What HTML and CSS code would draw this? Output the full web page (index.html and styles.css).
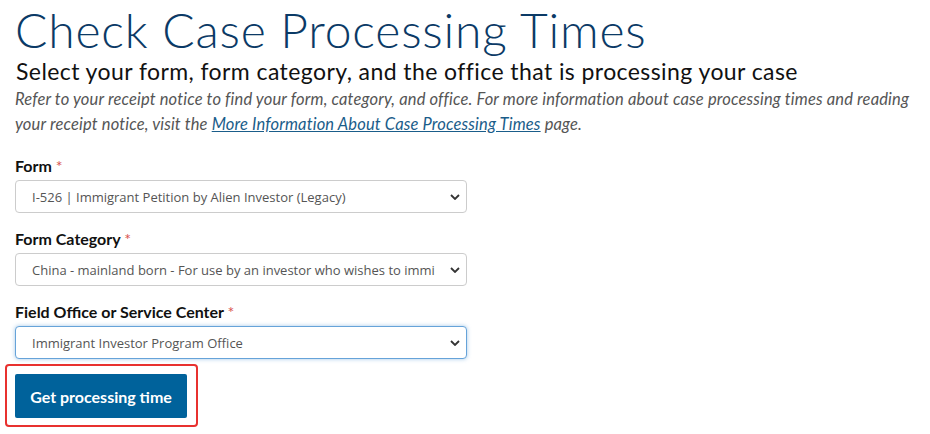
FILE: index.html
```html
<!DOCTYPE html>
<html lang="en">
<head>
<meta charset="utf-8">
<title>Check Case Processing Times</title>
<link rel="stylesheet" href="styles.css">
</head>
<body>
<main class="page">
  <h1 class="title">Check Case Processing Times</h1>
  <h2 class="subtitle">Select your form, form category, and the office that is processing your case</h2>
  <p class="intro">Refer to your receipt notice to find your form, category, and office. For more information about case processing times and reading your receipt notice, visit the <a href="#" class="link">More Information About Case Processing Times</a> page.</p>

  <form class="form">
    <div class="field">
      <label class="label">Form <span class="req">*</span></label>
      <div class="select-wrap">
        <select class="select"><option>I-526 | Immigrant Petition by Alien Investor (Legacy)</option></select>
        <svg class="chev" viewBox="0 0 10 6" width="10" height="6"><path d="M1 1l4 4 4-4" fill="none" stroke="#333" stroke-width="1.8"/></svg>
      </div>
    </div>
    <div class="field">
      <label class="label">Form Category <span class="req">*</span></label>
      <div class="select-wrap">
        <select class="select"><option>China - mainland born - For use by an investor who wishes to immi</option></select>
        <svg class="chev" viewBox="0 0 10 6" width="10" height="6"><path d="M1 1l4 4 4-4" fill="none" stroke="#333" stroke-width="1.8"/></svg>
      </div>
    </div>
    <div class="field last">
      <label class="label">Field Office or Service Center <span class="req">*</span></label>
      <div class="select-wrap">
        <select class="select focused"><option>Immigrant Investor Program Office</option></select>
        <svg class="chev" viewBox="0 0 10 6" width="10" height="6"><path d="M1 1l4 4 4-4" fill="none" stroke="#333" stroke-width="1.8"/></svg>
      </div>
    </div>
    <div class="highlight">
      <button type="button" class="btn">Get processing time</button>
    </div>
  </form>
</main>
</body>
</html>
```
FILE: styles.css
```css
* { box-sizing: border-box; }
body {
  margin: 0;
  background: #fff;
  font-family: Lato, "Open Sans", sans-serif;
  color: #1b1b1b;
}
.page {
  padding: 0 0 0 15px;
}
.title {
  margin: 0;
  padding-top: 4px;
  font-size: 48px;
  font-weight: 300;
  color: #0b3a66;
  line-height: 52px;
  letter-spacing: 0.8px;
}
.subtitle {
  margin: 1px 0 0 1px;
  font-size: 23px;
  font-weight: 400;
  line-height: 28px;
  color: #111;
  letter-spacing: 0.42px;
}
.intro {
  margin: 2px 0 0 0;
  font-size: 16.5px;
  font-style: italic;
  color: #555;
  line-height: 25px;
  max-width: 910px;
  letter-spacing: 0.15px;
}
.link {
  color: #1a5d8a;
  text-decoration: underline;
}
.form {
  margin-top: 20px;
  display: flex;
  flex-direction: column;
}
.field {
  display: flex;
  flex-direction: column;
  margin-bottom: 17px;
}
.field.last { margin-bottom: 0; }
.label {
  font-size: 16px;
  font-weight: 700;
  line-height: 18px;
  margin-bottom: 5px;
  color: #111;
}
.req { color: #d9534f; font-weight: 400; }
.select-wrap {
  position: relative;
  width: 452px;
}
.select {
  appearance: none;
  -webkit-appearance: none;
  width: 452px;
  height: 33px;
  border: 1px solid #ccc;
  border-radius: 4px;
  background: #fff;
  font-family: "Open Sans", sans-serif;
  font-size: 13px;
  color: #555;
  padding: 0 30px 0 16px;
  outline: none;
}
.select.focused {
  border-color: #66a3d9;
  box-shadow: 0 0 4px rgba(102,163,217,0.6);
}
.chev {
  position: absolute;
  right: 7px;
  top: 14px;
}
.highlight {
  align-self: flex-start;
  margin: 5px 0 0 -10px;
  padding: 8px 9px 7px 8px;
  border: 2px solid #e8312f;
  border-radius: 4px;
}
.btn {
  display: block;
  width: 172px;
  height: 44px;
  background: #00629b;
  color: #fff;
  border: none;
  border-radius: 2px;
  font-family: Lato, sans-serif;
  font-size: 16px;
  font-weight: 700;
  padding: 0;
}
```
